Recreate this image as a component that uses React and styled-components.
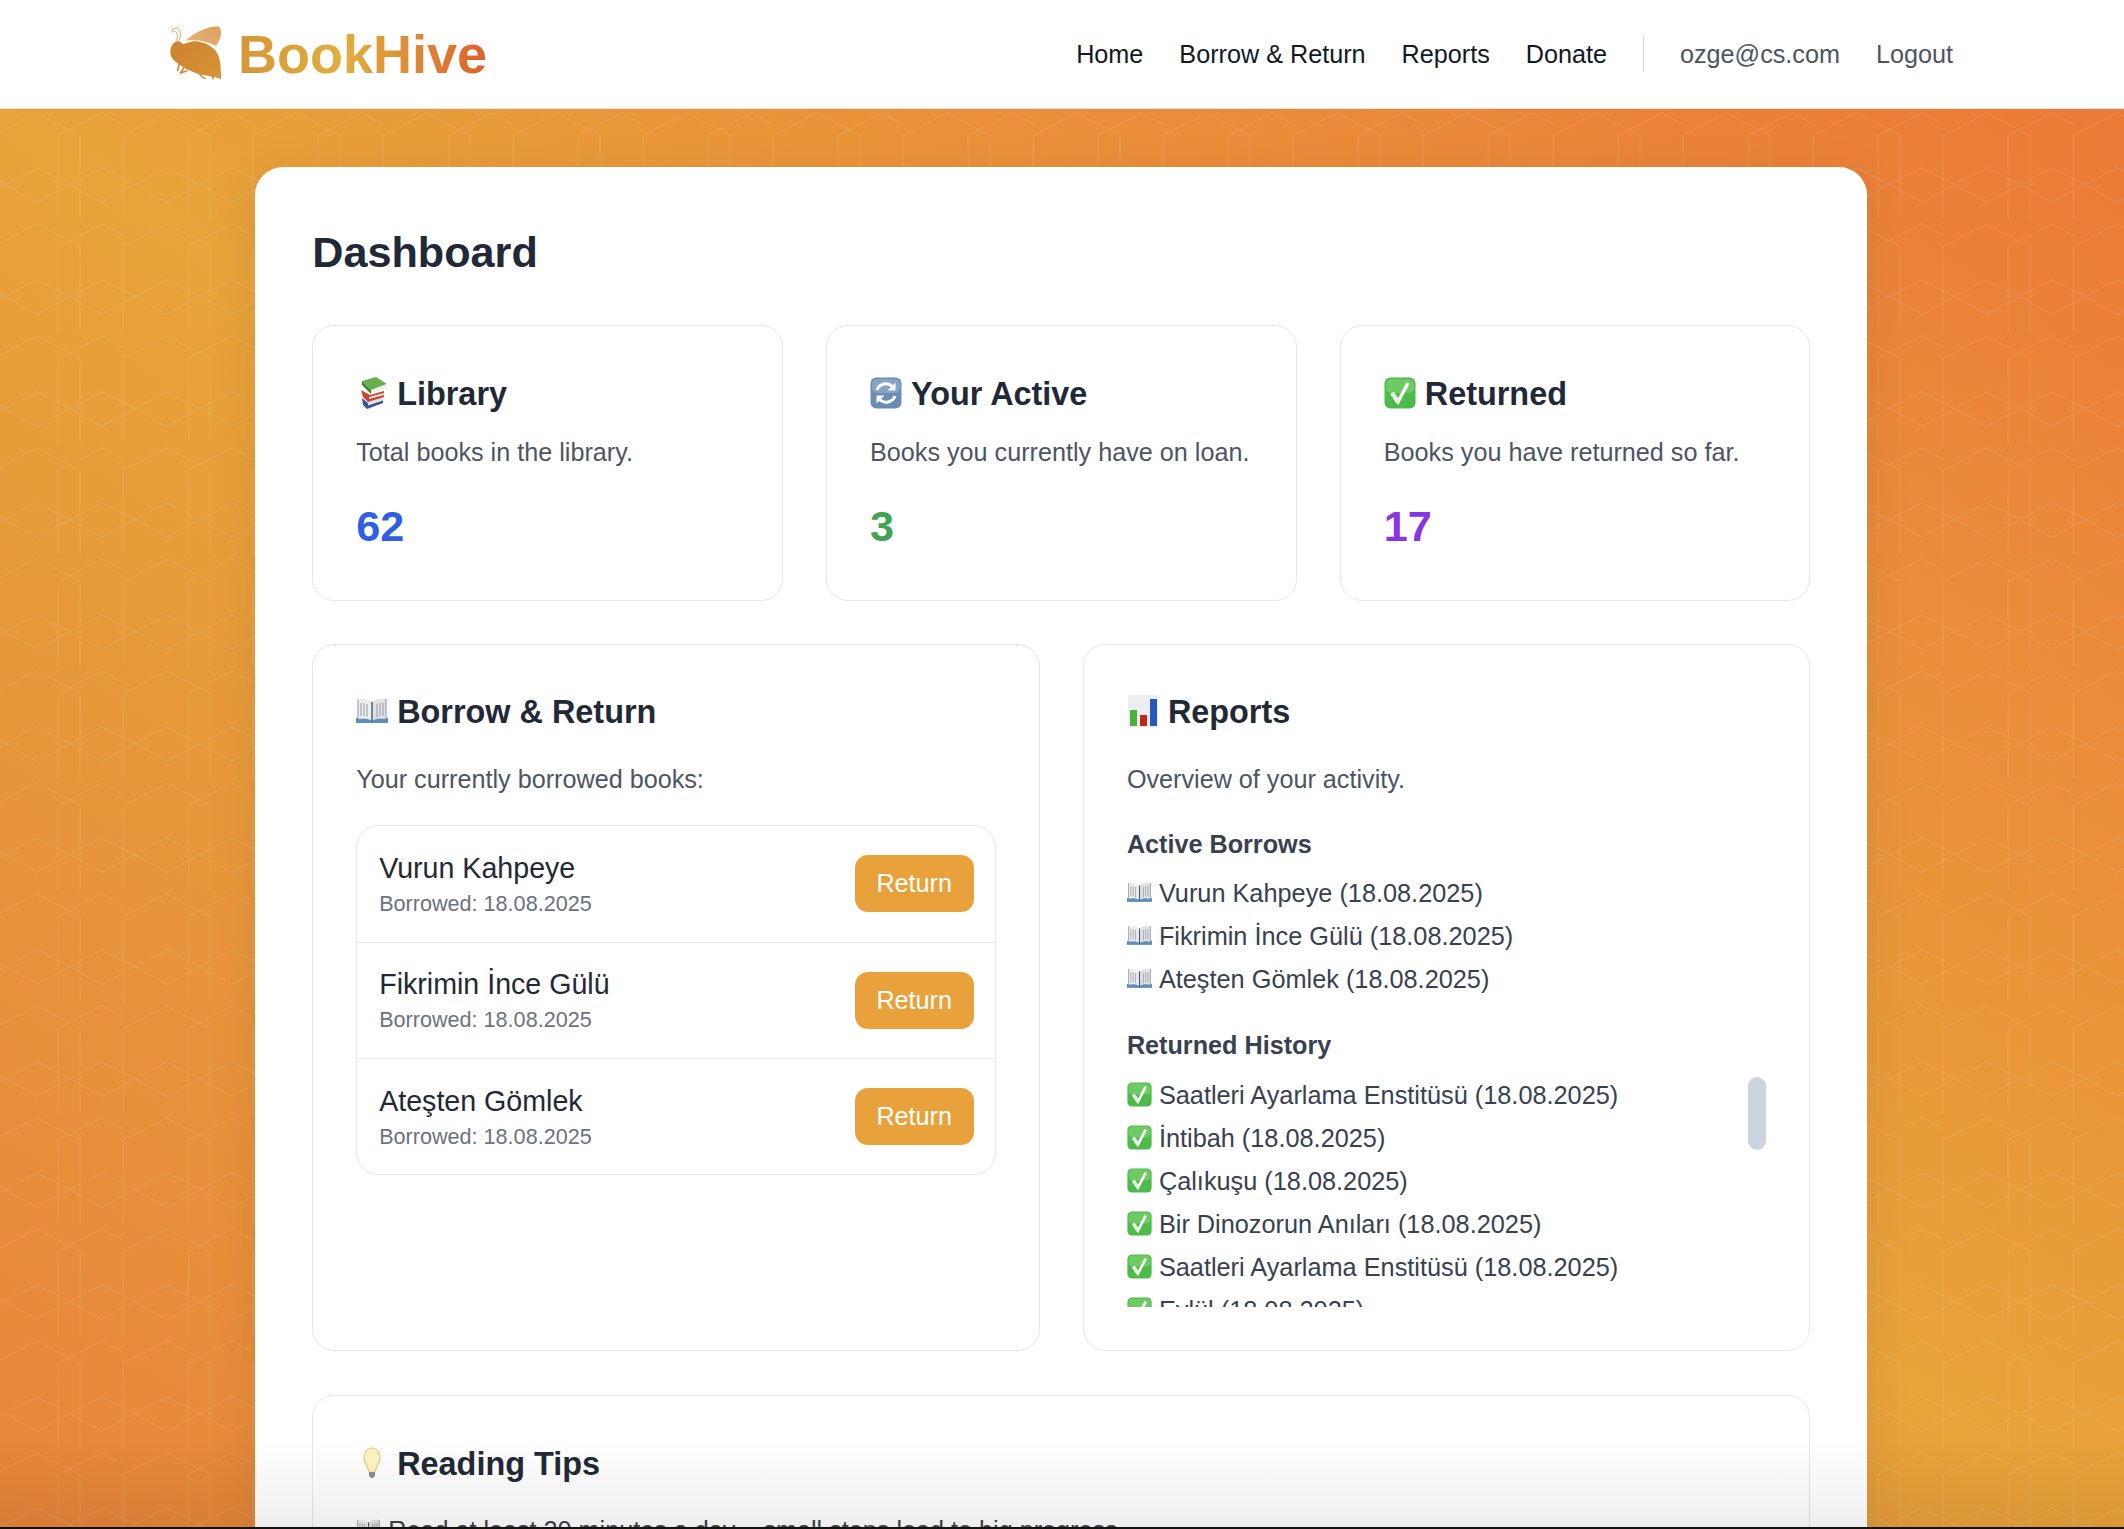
import React from "react";
import styled, { createGlobalStyle } from "styled-components";

const GlobalStyle = createGlobalStyle`
  html, body {
    margin: 0;
    height: 100%;
    overflow: hidden;
    font-family: "Liberation Sans", Arial, sans-serif;
  }
`;

const hexTile = encodeURIComponent(
  `<svg xmlns="http://www.w3.org/2000/svg" width="130" height="111.67" viewBox="0 0 130 111.67"><g transform="translate(0 2)" fill="none" stroke="#fff" stroke-opacity=".09" stroke-width="1.3"><path d="M-6.7 22.3L36.7 0L80 22.3V107M58.3 107V22.3L101.7 0L123.3 11.3M123.3 107V22.3L166.7 0"/><path d="M5 72.3L36.7 55.7L70 72.3L36.7 90ZM70 72.3L101.7 55.7L135 72.3L101.7 90ZM-60 72.3L-28.3 55.7L5 72.3L-28.3 90Z"/></g></svg>`
);

const returned = [
  "Saatleri Ayarlama Enstitüsü",
  "İntibah",
  "Çalıkuşu",
  "Bir Dinozorun Anıları",
  "Saatleri Ayarlama Enstitüsü",
  "Eylül",
];
const active = ["Vurun Kahpeye", "Fikrimin İnce Gülü", "Ateşten Gömlek"];

const BeeLogo = () => (
  <LogoMark viewBox="85 75 165 165">
    <defs>
      <linearGradient id="wing" x1="0" y1="1" x2="1" y2="0">
        <stop offset="0" stopColor="#e8b67c" />
        <stop offset="1" stopColor="#dd9f5c" />
      </linearGradient>
      <linearGradient id="body" x1="0" y1="0" x2="1" y2="1">
        <stop offset="0" stopColor="#cc8230" />
        <stop offset="1" stopColor="#d99435" />
      </linearGradient>
    </defs>
    <path d="M134 122C165 94 208 76 236 80C245 92 242 118 226 138C200 124 165 118 134 122Z" fill="url(#wing)" />
    <path
      d="M110 124C94 128 86 146 90 164C94 178 104 184 114 192C128 204 150 214 172 222C186 226 214 226 242 238C240 214 242 188 232 164C222 142 196 128 168 124C152 122 134 132 126 132C122 128 116 124 110 124Z"
      fill="url(#body)"
    />
    <path d="M112 126C122 112 122 96 112 85C106 82 98 86 92 92M106 124C112 112 112 100 104 94C100 92 96 94 92 97" fill="none" stroke="#dfa35f" strokeWidth="3" />
    <path d="M116 192C114 200 112 208 110 213M130 202C126 210 122 216 118 220L140 212M176 218C178 226 184 232 194 236M214 226L218 238" fill="none" stroke="#d18a32" strokeWidth="5" />
  </LogoMark>
);

const BooksEmoji = () => (
  <Emoji viewBox="0 0 32 32">
    <path d="M6 21l6 5 15-5v5l-16 6-4-4z" fill="#34549e" />
    <path d="M12 26l15-5v2.5L12 28.500z" fill="#e6e8ee" />
    <path d="M5 13l9 5 14-4v6l-16 5-5-5z" fill="#c8452f" />
    <path d="M13 20l15-4v2l-15 4z" fill="#f2ece0" />
    <path d="M6 4L20 0l11 7-16 6z" fill="#69ae4c" />
    <path d="M6 4l9 9v4L6 8z" fill="#3f8536" />
    <path d="M15 13l16-6v3l-16 7z" fill="#eef1e8" />
  </Emoji>
);

const RefreshEmoji = () => (
  <Emoji viewBox="0 0 32 32">
    <rect x="0.500" y="0.500" width="31" height="31" rx="6" fill="#6b8db3" />
    <rect x="2" y="2" width="28" height="14" rx="5" fill="#9db6d0" opacity=".55" />
    <path d="M7 13a9.500 9.500 0 0 1 15.500-3.500" fill="none" stroke="#fff" strokeWidth="3" />
    <path d="M25.500 5.500v8h-8z" fill="#fff" />
    <path d="M25 19a9.500 9.500 0 0 1-15.500 3.500" fill="none" stroke="#fff" strokeWidth="3" />
    <path d="M6.500 26.500v-8h8z" fill="#fff" />
  </Emoji>
);

const CheckEmoji = ({ small }) => (
  <Emoji viewBox="0 0 32 32" $small={small}>
    <rect x="0.500" y="0.500" width="31" height="31" rx="6" fill="#4dbb4a" />
    <rect x="2" y="2" width="28" height="14" rx="5" fill="#8fdc7c" opacity=".5" />
    <path d="M8 16l6 9L24 6" fill="none" stroke="#fff" strokeWidth="3.400" />
    <path d="M8 16l6 9" fill="none" stroke="#e8f5e4" strokeWidth="4.400" />
  </Emoji>
);

const BookEmoji = ({ small }) => (
  <Emoji viewBox="0 0 32 26" $small={small}>
    <path d="M0 20h32v5H0z" fill="#5d8fbd" />
    <path d="M2 1c5-1 10 0 14 3v19c-4-3-9-3-14-2z" fill="#eceef0" />
    <path d="M30 1c-5-1-10 0-14 3v19c4-3 9-3 14-2z" fill="#dfe1e5" />
    <path d="M2 1v20M30 1v20" stroke="#8f949c" strokeWidth="1" />
    <path d="M5 5v13M8 5v13M11 6v13M21 6v13M24 5v13M27 5v13" stroke="#a3a7af" strokeWidth="1.200" />
    <path d="M16 4v20" stroke="#4b5563" strokeWidth="1.400" />
  </Emoji>
);

const ChartEmoji = () => (
  <Emoji viewBox="0 0 32 32">
    <rect x="1" y="0" width="30" height="32" fill="#eceef0" />
    <rect x="3" y="15" width="7" height="16" fill="#4fae3d" />
    <rect x="13" y="20" width="7" height="11" fill="#c0281c" />
    <rect x="23" y="4" width="7" height="27" fill="#2459bd" />
  </Emoji>
);

const BulbEmoji = () => (
  <Emoji viewBox="0 0 32 32">
    <path d="M16 1C10 1 8 7 8 11c0 5 4 8 5 14h6c1-6 5-9 5-14 0-4-2-10-8-10z" fill="#fdf3c4" stroke="#eccb72" strokeWidth="1.200" />
    <path d="M13 25h6v4l-2 2h-2l-2-2z" fill="#8a8f96" />
  </Emoji>
);

export default function App() {
  return (
    <>
      <GlobalStyle />
      <Page>
        <Header>
          <Logo>
            <BeeLogo />
            <LogoText>BookHive</LogoText>
          </Logo>
          <Nav>
            <NavLink>Home</NavLink>
            <NavLink>Borrow &amp; Return</NavLink>
            <NavLink>Reports</NavLink>
            <NavLink>Donate</NavLink>
            <NavDivider />
            <NavLink $muted>ozge@cs.com</NavLink>
            <NavLink $muted>Logout</NavLink>
          </Nav>
        </Header>
        <Backdrop>
          <Sheet>
            <PageTitle>Dashboard</PageTitle>
            <StatsGrid>
              <StatCard>
                <CardTitle><BooksEmoji />Library</CardTitle>
                <StatText>Total books in the library.</StatText>
                <StatValue $color="#2f5fe4">62</StatValue>
              </StatCard>
              <StatCard>
                <CardTitle><RefreshEmoji />Your Active</CardTitle>
                <StatText>Books you currently have on loan.</StatText>
                <StatValue $color="#43a354">3</StatValue>
              </StatCard>
              <StatCard>
                <CardTitle><CheckEmoji />Returned</CardTitle>
                <StatText>Books you have returned so far.</StatText>
                <StatValue $color="#8a35e3">17</StatValue>
              </StatCard>
            </StatsGrid>
            <TwoColumns>
              <Card>
                <CardTitle><BookEmoji />Borrow &amp; Return</CardTitle>
                <Lead>Your currently borrowed books:</Lead>
                <BorrowList>
                  {active.map((name) => (
                    <BorrowRow key={name}>
                      <div>
                        <BookName>{name}</BookName>
                        <BorrowDate>Borrowed: 18.08.2025</BorrowDate>
                      </div>
                      <ReturnButton>Return</ReturnButton>
                    </BorrowRow>
                  ))}
                </BorrowList>
              </Card>
              <Card>
                <CardTitle><ChartEmoji />Reports</CardTitle>
                <Lead>Overview of your activity.</Lead>
                <SubHeading>Active Borrows</SubHeading>
                <ActivityList>
                  {active.map((name) => (
                    <ActivityItem key={name}>
                      <BookEmoji small />
                      {name} (18.08.2025)
                    </ActivityItem>
                  ))}
                </ActivityList>
                <SubHeading>Returned History</SubHeading>
                <HistoryBox>
                  <HistoryList>
                    {returned.map((name, i) => (
                      <ActivityItem key={i}>
                        <CheckEmoji small />
                        {name} (18.08.2025)
                      </ActivityItem>
                    ))}
                  </HistoryList>
                  <ScrollThumb />
                </HistoryBox>
              </Card>
            </TwoColumns>
            <TipsCard>
              <CardTitle><BulbEmoji />Reading Tips</CardTitle>
              <TipText><BookEmoji small />Read at least 20 minutes a day – small steps lead to big progress.</TipText>
            </TipsCard>
          </Sheet>
          <ScreenEdge />
        </Backdrop>
      </Page>
    </>
  );
}

const Page = styled.div`
  display: flex;
  flex-direction: column;
  height: 100vh;
  overflow: hidden;
`;

const Header = styled.header`
  flex: none;
  height: 108px;
  box-sizing: content-box;
  display: flex;
  align-items: center;
  justify-content: space-between;
  padding: 0 171px 0 169px;
  background: #fff;
  border-bottom: 1px solid #dfe3e8;
`;

const Logo = styled.div`
  display: flex;
  align-items: center;
  gap: 14px;
`;

const LogoMark = styled.svg`
  width: 55px;
  height: 55px;
  margin-top: -4px;
`;

const LogoText = styled.span`
  font-size: 54px;
  font-weight: 700;
  background: linear-gradient(90deg, #d69637 0%, #e1af3c 42%, #df8a36 70%, #df602c 100%);
  -webkit-background-clip: text;
  background-clip: text;
  color: transparent;
`;

const Nav = styled.nav`
  display: flex;
  align-items: center;
  gap: 36px;
`;

const NavLink = styled.a`
  font-size: 25.2px;
  color: ${(p) => (p.$muted ? "#4b5563" : "#111827")};
`;

const NavDivider = styled.span`
  width: 1px;
  height: 36px;
  background: #d1d5db;
`;

const Backdrop = styled.main`
  flex: 1;
  position: relative;
  min-height: 0;
  padding: 58px 0 0 255px;
  background-color: #e8a33a;
  background-image: url("data:image/svg+xml,${hexTile}"),
    linear-gradient(to top right, #e6853a 0%, #e8a33a 50%, #eb7a38 100%);
  background-size: 130px 111.67px, 100% 100%;
  background-position: 0 1.67px, 0 0;
  background-repeat: repeat, no-repeat;
`;

const Sheet = styled.div`
  box-sizing: border-box;
  width: 1612px;
  padding: 57.6px 56.6px 57.6px 57.2px;
  background: #fff;
  border-radius: 28px;
  box-shadow: 0 8px 48px rgba(0, 0, 0, 0.08);
`;

const PageTitle = styled.h1`
  margin: 0 0 46px;
  font-size: 43.2px;
  line-height: 54px;
  font-weight: 700;
  color: #1f2937;
`;

const StatsGrid = styled.div`
  display: grid;
  grid-template-columns: repeat(3, 1fr);
  gap: 43.2px;
  margin-bottom: 43.2px;
`;

const TwoColumns = styled.div`
  display: grid;
  grid-template-columns: repeat(2, 1fr);
  gap: 43.2px;
  height: 706px;
  margin-bottom: 45px;
`;

const Card = styled.section`
  box-sizing: border-box;
  min-width: 0;
  padding: 43px;
  background: #fff;
  border: 1px solid #e5e7eb;
  border-radius: 22px;
`;

const StatCard = styled(Card)`
  padding-top: 44px;
`;

const TipsCard = styled(Card)`
  padding-top: 44.5px;
`;

const CardTitle = styled.h2`
  margin: 0;
  font-size: 32.4px;
  line-height: 49px;
  font-weight: 700;
  color: #1f2937;
`;

const Emoji = styled.svg`
  width: ${(p) => (p.$small ? "25px" : "32px")};
  height: ${(p) => (p.$small ? "25px" : "32px")};
  margin-right: ${(p) => (p.$small ? "7px" : "9px")};
  vertical-align: ${(p) => (p.$small ? "-3px" : "-4px")};
`;

const StatText = styled.p`
  margin: 15px 0 0;
  font-size: 25.2px;
  line-height: 37px;
  color: #4b5563;
`;

const StatValue = styled.div`
  margin-top: 25px;
  font-size: 43.2px;
  line-height: 61px;
  font-weight: 700;
  color: ${(p) => p.$color};
`;

const Lead = styled.p`
  margin: 24px 0 0;
  font-size: 25.2px;
  line-height: 37px;
  color: #4b5563;
`;

const BorrowList = styled.div`
  margin-top: 27.5px;
  border: 1px solid #e5e7eb;
  border-radius: 22px;
`;

const BorrowRow = styled.div`
  display: flex;
  align-items: center;
  justify-content: space-between;
  height: 116.4px;
  box-sizing: border-box;
  padding: 0 21px 0 22px;
  border-bottom: 1px solid #e5e7eb;
  &:last-child {
    border-bottom: none;
    height: 115px;
  }
`;

const BookName = styled.div`
  font-size: 28.6px;
  line-height: 40px;
  color: #1f2937;
`;

const BorrowDate = styled.div`
  font-size: 21.6px;
  line-height: 32px;
  color: #6b7280;
`;

const ReturnButton = styled.button`
  width: 119px;
  height: 57px;
  padding: 0;
  border: none;
  border-radius: 13px;
  background: #e9a23b;
  color: #fff;
  font-family: inherit;
  font-size: 25.2px;
`;

const SubHeading = styled.h3`
  margin: 24px 0 8.5px;
  font-size: 25.2px;
  line-height: 40px;
  font-weight: 700;
  color: #374151;
  ${Lead} + & {
    margin-top: 26px;
  }
`;

const ActivityList = styled.ul`
  margin: 0;
  padding: 0;
  list-style: none;
`;

const HistoryBox = styled.div`
  position: relative;
`;

const HistoryList = styled(ActivityList)`
  height: 233px;
  overflow: hidden;
`;

const ScrollThumb = styled.div`
  position: absolute;
  top: 3px;
  right: 0;
  width: 18px;
  height: 73px;
  border-radius: 9px;
  background: #cbd5e1;
`;

const ActivityItem = styled.li`
  font-size: 25.3px;
  line-height: 43px;
  color: #374151;
`;

const TipText = styled.p`
  margin: 22.5px 0 0;
  font-size: 25.2px;
  line-height: 37px;
  color: #374151;
`;

const ScreenEdge = styled.div`
  position: absolute;
  left: 0;
  right: 0;
  bottom: 0;
  height: 88px;
  background: linear-gradient(to bottom, rgba(0, 0, 0, 0), rgba(0, 0, 0, 0.065));
  border-bottom: 2px solid #15110d;
  pointer-events: none;
`;
